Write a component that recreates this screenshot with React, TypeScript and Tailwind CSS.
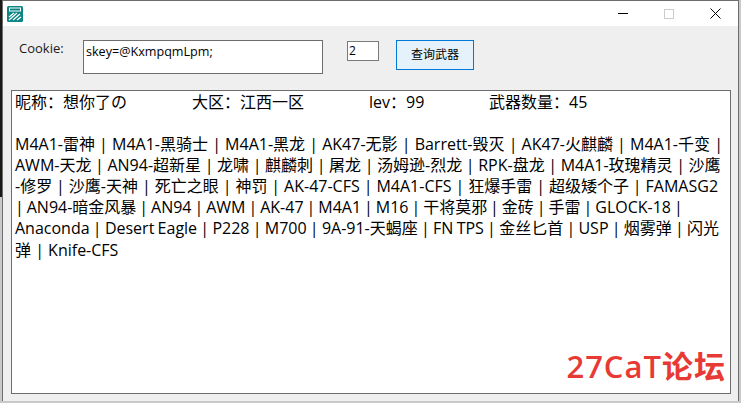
const weaponLines = [
  { text: 'M4A1-雷神 | M4A1-黑骑士 | M4A1-黑龙 | AK47-无影 | Barrett-毁灭 | AK47-火麒麟 | M4A1-千变 |', spacing: '' },
  { text: 'AWM-天龙 | AN94-超新星 | 龙啸 | 麒麟刺 | 屠龙 | 汤姆逊-烈龙 | RPK-盘龙 | M4A1-玫瑰精灵 | 沙鹰', spacing: '[word-spacing:-0.55px]' },
  { text: '-修罗 | 沙鹰-天神 | 死亡之眼 | 神罚 | AK-47-CFS | M4A1-CFS | 狂爆手雷 | 超级矮个子 | FAMASG2', spacing: '[word-spacing:-0.2px]' },
  { text: '| AN94-暗金风暴 | AN94 | AWM | AK-47 | M4A1 | M16 | 干将莫邪 | 金砖 | 手雷 | GLOCK-18 |', spacing: '[word-spacing:-1.2px]' },
  { text: 'Anaconda | Desert Eagle | P228 | M700 | 9A-91-天蝎座 | FN TPS | 金丝匕首 | USP | 烟雾弹 | 闪光', spacing: '[word-spacing:-0.9px]' },
  { text: '弹 | Knife-CFS', spacing: '' },
]

const font = "font-['Open_Sans','Noto_Sans_CJK_SC',sans-serif]"

const AppIcon = () => (
  <svg width="16" height="16" viewBox="0 0 16 16" className="shrink-0">
    <rect width="16" height="16" rx="1.5" fill="#0b8585" />
    <rect x="2.5" y="2" width="11" height="3" fill="none" stroke="#fff" strokeWidth="1" />
    <path d="M2 11l5-4M2 14l8-7M6 14l7-6M10 14l4-3" stroke="#fff" strokeWidth="1.3" fill="none" />
  </svg>
)

const TitleBar = () => (
  <div className="flex h-[25px] items-center justify-between bg-white pl-[4px]">
    <AppIcon />
    <div className="flex items-center">
      <div className="flex h-[25px] w-[46px] items-center justify-center">
        <div className="h-px w-[10px] bg-black" />
      </div>
      <div className="flex h-[25px] w-[46px] items-center justify-center">
        <div className="h-[10px] w-[10px] border border-[#cccccc]" />
      </div>
      <div className="flex h-[25px] w-[46px] items-center justify-center">
        <svg width="11" height="11" viewBox="0 0 11 11">
          <path d="M.5.5l10 10M10.5.5l-10 10" stroke="#000" strokeWidth="1" fill="none" />
        </svg>
      </div>
    </div>
  </div>
)

const App = () => {
  return (
    <div className={`flex h-[403px] w-[741px] overflow-hidden bg-[#c9c9c9] ${font}`}>
      <div className="h-[197px] w-[2px] shrink-0 bg-[#1c1a16]" />
      <div className="h-[401px] w-[737px] border-t border-l border-r border-[#6d6d6d] bg-[#efefef]">
        <TitleBar />

        <div className="flex h-[64px] items-start pl-[16px] pt-[14px]">
          <span className="w-[64px] text-[13px] leading-[16px] text-[#1a1a1a]">Cookie:</span>
          <div className="h-[34px] w-[240px] border border-[#6d6d6d] bg-white px-[2px] pt-[2px] text-[12.6px] leading-[18px] text-black">
            skey=@KxmpqmLpm;
          </div>
          <div className="ml-[24px] mt-[1px] h-[20px] w-[32px] border border-[#7a7a7a] bg-white pl-[1px] text-[12px] leading-[18px] text-black">
            2
          </div>
          <button className="ml-[17px] h-[30px] w-[78px] border border-[#0078d7] bg-[#e5f1fb] text-[12px] leading-[16px] text-black">
            查询武器
          </button>
        </div>

        <div className="relative ml-[8px] h-[304px] w-[720px] border border-[#6d6d6d] bg-white px-[3px] pt-[1px] text-[16px] leading-[21.1px] text-black">
          <div className="flex">
            <span className="w-[177px]">昵称：想你了の</span>
            <span className="w-[177px]">大区：江西一区</span>
            <span className="w-[120px]">lev：99</span>
            <span>武器数量：45</span>
          </div>
          <div className="mt-[21px] whitespace-nowrap">
            {weaponLines.map((line) => (
              <div key={line.text} className={line.spacing}>
                {line.text}
              </div>
            ))}
          </div>
          <span className="absolute bottom-[9px] right-[4px] text-[31px] font-semibold leading-[36px] tracking-[1px] text-[#e83a35]">
            27CaT论坛
          </span>
        </div>
      </div>
    </div>
  )
}

export default App
